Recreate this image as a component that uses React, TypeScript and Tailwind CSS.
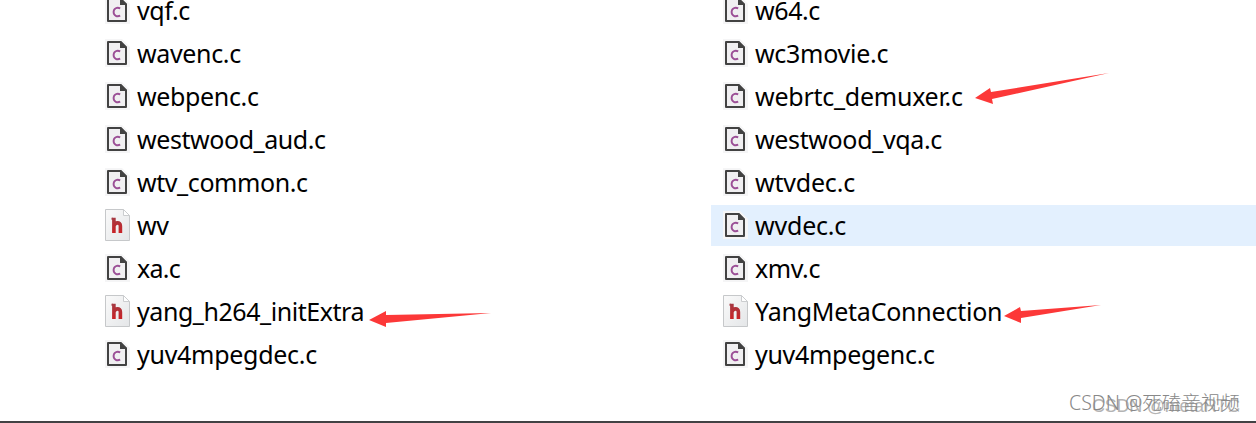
type Entry = { name: string; kind: "c" | "h"; tracking: string; active?: boolean };

const left: Entry[] = [
  { name: "vqf.c", kind: "c", tracking: "tracking-[-0.4px]" },
  { name: "wavenc.c", kind: "c", tracking: "tracking-[-0.35px]" },
  { name: "webpenc.c", kind: "c", tracking: "tracking-[-0.35px]" },
  { name: "westwood_aud.c", kind: "c", tracking: "tracking-[-0.43px]" },
  { name: "wtv_common.c", kind: "c", tracking: "tracking-[-0.42px]" },
  { name: "wv", kind: "h", tracking: "tracking-[-0.5px]" },
  { name: "xa.c", kind: "c", tracking: "tracking-[-0.7px]" },
  { name: "yang_h264_initExtra", kind: "h", tracking: "tracking-[-0.45px]" },
  { name: "yuv4mpegdec.c", kind: "c", tracking: "tracking-[-0.28px]" },
];

const right: Entry[] = [
  { name: "w64.c", kind: "c", tracking: "tracking-[-0.4px]" },
  { name: "wc3movie.c", kind: "c", tracking: "tracking-[-0.28px]" },
  { name: "webrtc_demuxer.c", kind: "c", tracking: "tracking-[-0.25px]" },
  { name: "westwood_vqa.c", kind: "c", tracking: "tracking-[-0.36px]" },
  { name: "wtvdec.c", kind: "c", tracking: "tracking-[-0.2px]" },
  { name: "wvdec.c", kind: "c", tracking: "tracking-[-0.2px]", active: true },
  { name: "xmv.c", kind: "c", tracking: "tracking-[-0.4px]" },
  { name: "YangMetaConnection", kind: "h", tracking: "tracking-[-0.24px]" },
  { name: "yuv4mpegenc.c", kind: "c", tracking: "tracking-[-0.3px]" },
];

function CFileIcon() {
  return (
    <svg className="mb-px h-8 w-8 shrink-0" viewBox="0 0 32 32">
      <path d="M4 2H21L29 10V30H4Z" fill="#f5f5f6" />
      <path d="M7 5H19L25 11V27H7Z" fill="#f0eff1" />
      <path d="M7 5H19.5L25 10.5V27H7Z" fill="none" stroke="#424242" strokeWidth="2" strokeLinejoin="round" />
      <path d="M19 4.5V11H26V10L20 4Z" fill="#424242" />
      <path d="M19.2 14.4C16.2 13 12.6 14.2 12.6 18.1C12.6 22 16.2 23 19.2 21.7" fill="none" stroke="#9b4f96" strokeWidth="1.9" />
    </svg>
  );
}

function HFileIcon() {
  return (
    <svg className="mb-px h-8 w-8 shrink-0" viewBox="0 0 32 32">
      <defs>
        <linearGradient id="paper" x1="0" y1="0" x2="1" y2="1">
          <stop offset="0" stopColor="#fafafa" />
          <stop offset="1" stopColor="#e4e6e8" />
        </linearGradient>
        <linearGradient id="letter" gradientUnits="userSpaceOnUse" x1="0" y1="8" x2="0" y2="24">
          <stop offset="0" stopColor="#a43b44" />
          <stop offset="1" stopColor="#c92226" />
        </linearGradient>
      </defs>
      <path d="M4.5 0.5H22.5L28.5 6.5V31.5H4.5Z" fill="url(#paper)" stroke="#c6c8ca" />
      <path d="M22.5 0.5V6.5H28.5Z" fill="#ffffff" stroke="#cbcdcf" />
      <path d="M12.9 8.8V24M12.9 17C14 12.9 19.4 12.7 19.4 17V24" fill="none" stroke="url(#letter)" strokeWidth="3.6" />
      <path d="M10.5 9.8H12" fill="none" stroke="#a43b44" strokeWidth="2" />
    </svg>
  );
}

function FileColumn({ entries, className }: { entries: Entry[]; className: string }) {
  return (
    <ul className={`flex flex-col gap-[2px] ${className}`}>
      {entries.map((entry) => (
        <li
          key={entry.name}
          className={`flex h-[41px] items-center pl-2 ${entry.active ? "bg-[#e3f0fe]" : ""}`}
        >
          {entry.kind === "c" ? <CFileIcon /> : <HFileIcon />}
          <span className={`ml-1 text-[25px] leading-[41px] whitespace-nowrap ${entry.tracking}`}>
            {entry.name}
          </span>
        </li>
      ))}
    </ul>
  );
}

export default function App() {
  return (
    <main className="relative h-[423px] w-[1256px] overflow-hidden bg-white font-['Noto_Sans','Noto_Sans_CJK_SC',sans-serif] text-black">
      <div className="box-content flex h-[421px] border-b-2 border-[#424244]">
        <div className="-mt-[10px] flex w-full pl-[93px]">
          <FileColumn entries={left} className="w-[618px] shrink-0" />
          <FileColumn entries={right} className="w-[545px] shrink-0" />
        </div>
      </div>
      <svg className="pointer-events-none absolute inset-0" width="1256" height="423" fill="#fc3838">
        <path d="M975 98L990 88L991 92L1109 73L992 99L993 104Z" />
        <path d="M369 320L386 311V315L491 313L386 323V327Z" />
        <path d="M1004 316L1020 307L1021 311L1101 305L1021 318V323Z" />
      </svg>
      <div className="absolute top-[396px] left-[1092px] font-['Liberation_Sans','Noto_Sans_CJK_SC',sans-serif] text-[18px] leading-[20px] tracking-[-0.25px] whitespace-nowrap text-[#b4b4b4]">
        CSDN @metaRTC
      </div>
      <div className="absolute top-[391px] left-[1069px] font-['Noto_Sans','Noto_Sans_CJK_SC',sans-serif] text-[19.5px] leading-[24px] font-light whitespace-nowrap text-[#888888]">
        CSDN @死磕音视频
      </div>
    </main>
  );
}
